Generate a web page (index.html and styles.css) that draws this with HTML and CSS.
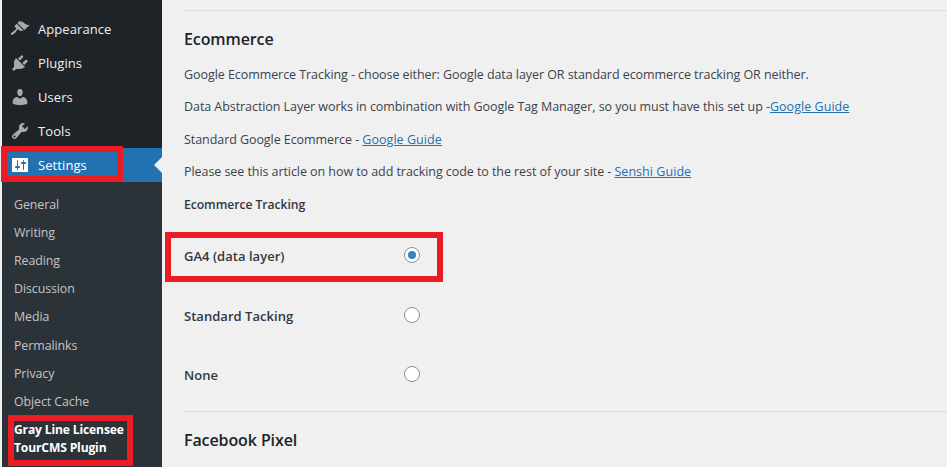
FILE: index.html
```html
<!DOCTYPE html>
<html lang="en">
<head>
<meta charset="utf-8">
<title>Ecommerce settings</title>
<link rel="stylesheet" href="styles.css">
</head>
<body>
<div class="page">
  <nav class="sidebar">
    <ul class="menu">
      <li class="item">
        <svg class="icon" viewBox="0 0 20 20"><path d="M14.48 11.06L7.41 3.99l1.5-1.5c.5-.56 2.3-.47 3.51.32 1.21.8 1.43 1.28 2.91 2.1 1.18.64 2.45 1.26 4.45.85zm-.71.71L6.7 4.7 4.93 6.47c-.39.39-.39 1.02 0 1.41l1.06 1.06c.39.39.39 1.03 0 1.42-.6.6-1.43 1.11-2.21 1.69-.35.26-.7.53-1.01.84C1.43 13.23.4 14.98 1.1 15.68c.7.7 2.45-.33 3.79-1.67.31-.31.58-.66.85-1.01.57-.78 1.08-1.61 1.69-2.21.39-.39 1.02-.39 1.41 0l1.06 1.06c.39.39 1.02.39 1.41 0z"/></svg>
        <span>Appearance</span>
      </li>
      <li class="item">
        <svg class="icon" viewBox="0 0 20 20"><path d="M13.11 4.36L9.87 7.6 8 5.73l3.24-3.24c.35-.34 1.05-.2 1.56.32.52.51.66 1.21.31 1.55zm-8 1.77l.91-1.12 9.01 9.01-1.19.84c-.71.71-2.63 1.16-3.82 1.16H6.14L4.9 17.26c-.59.59-1.54.59-2.12 0-.59-.58-.59-1.53 0-2.12l1.24-1.24v-3.88c0-1.13.4-3.19 1.09-3.89zm7.26 3.97l3.24-3.24c.34-.35 1.04-.21 1.55.31.52.51.66 1.21.31 1.55l-3.24 3.25z"/></svg>
        <span>Plugins</span>
      </li>
      <li class="item">
        <svg class="icon" viewBox="0 0 20 20"><path d="M10 9.25c-2.27 0-2.73-3.44-2.73-3.44C7 4.02 7.82 2 9.97 2c2.16 0 2.98 2.02 2.71 3.81 0 0-.41 3.44-2.68 3.44zm0 2.57L12.72 10c2.39 0 4.52 2.33 4.52 4.53v2.49s-3.65 1.13-7.24 1.13c-3.65 0-7.24-1.13-7.24-1.13v-2.49c0-2.25 1.94-4.48 4.47-4.48z"/></svg>
        <span>Users</span>
      </li>
      <li class="item">
        <svg class="icon" viewBox="0 0 20 20"><path d="M16.68 9.77c-1.34 1.34-3.3 1.67-4.95.99l-5.41 6.52c-.99.99-2.59.99-3.58 0s-.99-2.59 0-3.57l6.52-5.42c-.68-1.65-.35-3.61.99-4.95 1.28-1.28 3.12-1.62 4.72-1.06l-2.89 2.89 2.82 2.82 2.86-2.87c.53 1.58.18 3.39-1.08 4.65zM3.81 16.21c.4.39 1.04.39 1.43 0 .4-.4.4-1.04 0-1.43-.39-.4-1.03-.4-1.43 0-.39.39-.39 1.03 0 1.43z"/></svg>
        <span>Tools</span>
      </li>
      <li class="item item-current">
        <svg class="icon icon-current" viewBox="0 0 20 20"><path d="M18 16V4c0-.55-.45-1-1-1H3c-.55 0-1 .45-1 1v12c0 .55.45 1 1 1h14c.55 0 1-.45 1-1zM8 11h1c.55 0 1 .45 1 1s-.45 1-1 1H8v1.500c0 .28-.22.5-.5.5s-.5-.22-.5-.5V13H6c-.55 0-1-.45-1-1s.45-1 1-1h1V5.500c0-.28.22-.5.5-.5s.5.22.5.5V11zm5-2h-1c-.55 0-1-.45-1-1s.45-1 1-1h1V5.500c0-.28.22-.5.5-.5s.5.22.5.5V7h1c.55 0 1 .45 1 1s-.45 1-1 1h-1v5.500c0 .28-.22.5-.5.5s-.5-.22-.5-.5V9z"/></svg>
        <span>Settings</span>
      </li>
    </ul>
    <ul class="submenu">
      <li class="sub">General</li>
      <li class="sub">Writing</li>
      <li class="sub">Reading</li>
      <li class="sub">Discussion</li>
      <li class="sub">Media</li>
      <li class="sub">Permalinks</li>
      <li class="sub">Privacy</li>
      <li class="sub">Object Cache</li>
      <li class="sub sub-strong">Gray Line Licensee<br>TourCMS Plugin</li>
    </ul>
  </nav>

  <main class="content">
    <hr class="rule rule-top">
    <h2 class="heading">Ecommerce</h2>
    <p class="para">Google Ecommerce Tracking - choose either: Google data layer OR standard ecommerce tracking OR neither.</p>
    <p class="para">Data Abstraction Layer works in combination with Google Tag Manager, so you must have this set up -<a href="#">Google Guide</a></p>
    <p class="para">Standard Google Ecommerce - <a href="#">Google Guide</a></p>
    <p class="para">Please see this article on how to add tracking code to the rest of your site - <a href="#">Senshi Guide</a></p>
    <p class="para para-strong">Ecommerce Tracking</p>
    <div class="options">
      <div class="option"><span class="option-label">GA4 (data layer)</span><span class="radio radio-on"></span></div>
      <div class="option"><span class="option-label">Standard Tacking</span><span class="radio"></span></div>
      <div class="option"><span class="option-label">None</span><span class="radio"></span></div>
    </div>
    <hr class="rule rule-bottom">
    <h2 class="heading">Facebook Pixel</h2>
  </main>
</div>
<div class="mark mark-settings"></div>
<div class="mark mark-plugin"></div>
<div class="mark mark-ga4"></div>
</body>
</html>
```
FILE: styles.css
```css
* { box-sizing: border-box; }
html, body { margin: 0; padding: 0; height: 467px; overflow: hidden; }
body { background: #f0f0f1; font-family: "Open Sans", "Liberation Sans", sans-serif; color: #3c434a; position: relative; }
.page { display: flex; height: 467px; padding-left: 2px; }
.sidebar { width: 160px; flex: none; height: 467px; background: #1d2327; padding-top: 12px; overflow: hidden; }
.menu, .submenu { list-style: none; margin: 0; padding: 0; }
.item { height: 34px; display: flex; align-items: center; gap: 8px; padding-left: 8px; color: #f0f0f1; font-size: 13px; letter-spacing: .08px; position: relative; }
.icon { width: 20px; height: 20px; fill: #a7aaad; flex: none; }
.item-current { background: #2271b1; color: #fff; }
.icon-current { fill: #fff; }
.item-current::after { content: ""; position: absolute; right: 0; top: 9px; border: 8px solid transparent; border-right-color: #f0f0f1; border-left-width: 0; }
.submenu { background: #2c3338; height: 285px; padding-top: 8px; }
.sub { height: 28.2px; display: flex; align-items: center; padding-left: 12px; color: #c3c4c7; font-size: 12.4px; letter-spacing: -.08px; }
.sub-strong { height: auto; display: block; color: #fff; font-size: 12.1px; font-weight: 700; line-height: 18px; padding-top: 5px; letter-spacing: -.15px; }
.content { flex: 1; min-width: 0; padding: 10px 0 0 22px; }
.rule { border: 0; border-top: 1px solid #dcdcde; margin: 0; }
.heading { margin: 0; font-size: 16px; font-weight: 600; color: #1d2327; line-height: 20px; letter-spacing: -.1px; }
.rule-top + .heading { margin-top: 18px; }
.rule-bottom + .heading { margin-top: 18px; }
.para { margin: 0; height: 32.4px; line-height: 18px; font-size: 12.5px; letter-spacing: -.065px; white-space: nowrap; }
.heading + .para { margin-top: 17px; }
.para a { color: #2271b1; text-decoration: underline; letter-spacing: .05px; }
.para-strong { font-size: 12.2px; font-weight: 600; color: #32383d; height: 18px; letter-spacing: -.06px; }
.options { padding-top: 12.500px; }
.option { height: 59.5px; display: flex; align-items: center; }
.option-label { width: 220px; flex: none; font-size: 13px; font-weight: 600; color: #32383d; padding-top: 1px; letter-spacing: .03px; }
.radio { width: 16px; height: 16px; border-radius: 50%; border: 1px solid #8c8f94; background: #fff; position: relative; margin-bottom: 1px; }
.radio-on::before { content: ""; position: absolute; left: 3px; top: 3px; width: 8px; height: 8px; border-radius: 50%; background: #3582c4; }
.rule-bottom { margin-top: 6px; }
.mark { position: absolute; border: 6px solid #ec1c24; pointer-events: none; }
.mark-settings { left: 1px; top: 146px; width: 122px; height: 36px; }
.mark-plugin { left: 8px; top: 415px; width: 125px; height: 51px; }
.mark-ga4 { left: 165px; top: 232px; width: 278px; height: 50px; }
```
